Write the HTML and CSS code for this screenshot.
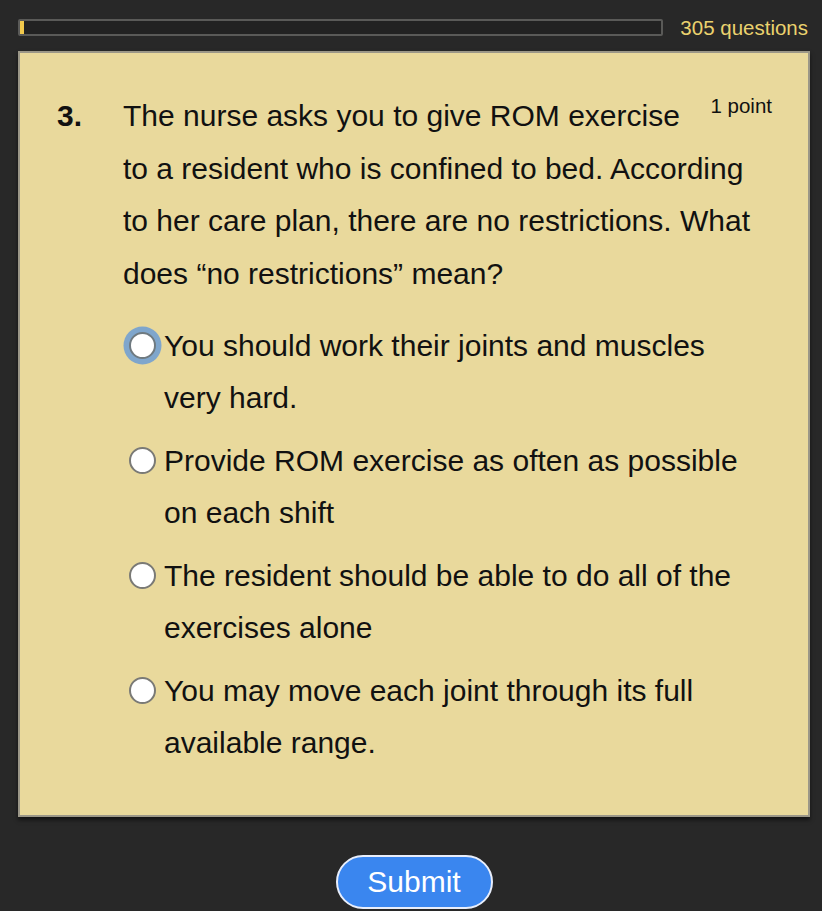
FILE: index.html
```html
<!DOCTYPE html>
<html lang="en">
<head>
<meta charset="utf-8">
<title>Quiz</title>
<link rel="stylesheet" href="styles.css">
</head>
<body>
<div class="page">
  <div class="topbar">
    <div class="progress"><div class="progress-fill"></div></div>
    <div class="count">305 questions</div>
  </div>
  <div class="card">
    <div class="question">
      <div class="qnum">3.</div>
      <div class="qbody">
        <div class="qtext"><span class="points">1 point</span>The nurse asks you to give ROM exercise to a resident who is confined to bed. According to her care plan, there are no restrictions. What does “no restrictions” mean?</div>
        <div class="options">
          <label class="option"><span class="radio focused"></span><span class="otext">You should work their joints and muscles very hard.</span></label>
          <label class="option"><span class="radio"></span><span class="otext">Provide ROM exercise as often as possible on each shift</span></label>
          <label class="option"><span class="radio"></span><span class="otext">The resident should be able to do all of the exercises alone</span></label>
          <label class="option"><span class="radio"></span><span class="otext">You may move each joint through its full available range.</span></label>
        </div>
      </div>
    </div>
  </div>
  <div class="actions">
    <button class="submit">Submit</button>
  </div>
</div>
</body>
</html>
```

FILE: styles.css
```css
html, body {
  margin: 0;
  padding: 0;
  background: #282828;
  font-family: "Liberation Sans", Arial, Helvetica, sans-serif;
}

.page {
  padding: 15.5px 12px 0 18px;
  min-height: 911px;
  box-sizing: border-box;
}

.topbar {
  display: flex;
  align-items: center;
  padding-right: 2px;
}

.progress {
  flex: 1;
  height: 17px;
  box-sizing: border-box;
  border: 2px solid #5a5a58;
  background: #222222;
  border-radius: 2px;
}

.progress-fill {
  width: 4px;
  height: 100%;
  background: #f2c94c;
}

.count {
  margin-left: 17px;
  color: #ebd26e;
  font-size: 20.5px;
  line-height: 24px;
}

.card {
  margin-top: 11.5px;
  background: #e9d99c;
  border: 2px solid #9b9788;
  box-shadow: 0 3px 4px rgba(0, 0, 0, 0.55);
  padding: 37px 34px 45px 37px;
}

.question {
  display: flex;
}

.qnum {
  width: 66px;
  flex-shrink: 0;
  font-weight: bold;
  font-size: 30px;
  line-height: 52.5px;
  color: #111;
}

.qbody {
  flex: 1;
  min-width: 0;
}

.qtext {
  font-size: 30px;
  line-height: 52.5px;
  color: #111;
}

.points {
  float: right;
  font-size: 20.5px;
  line-height: 32px;
  margin-left: 10px;
  margin-right: 2px;
  color: #111;
}

.options {
  margin: 19.5px 9px 0 6px;
  display: flex;
  flex-direction: column;
  gap: 10px;
}

.option {
  display: flex;
  align-items: flex-start;
}

.radio {
  flex-shrink: 0;
  width: 27px;
  height: 27px;
  box-sizing: border-box;
  border: 2.5px solid #7a7a76;
  border-radius: 50%;
  background: #ffffff;
  margin-top: 12.75px;
  margin-right: 8px;
}

.radio.focused {
  border-color: #6f7a80;
  box-shadow: 0 0 0 5.5px #7fa6cc;
}

.otext {
  font-size: 30px;
  line-height: 52.5px;
  color: #111;
}

.actions {
  display: flex;
  justify-content: center;
  margin-top: 38px;
}

.submit {
  width: 157px;
  height: 54px;
  border-radius: 27px;
  border: 2px solid #e8eefb;
  background: #3a86ef;
  color: #ffffff;
  font-family: "Liberation Sans", Arial, Helvetica, sans-serif;
  font-size: 30px;
  padding: 0;
}
```
